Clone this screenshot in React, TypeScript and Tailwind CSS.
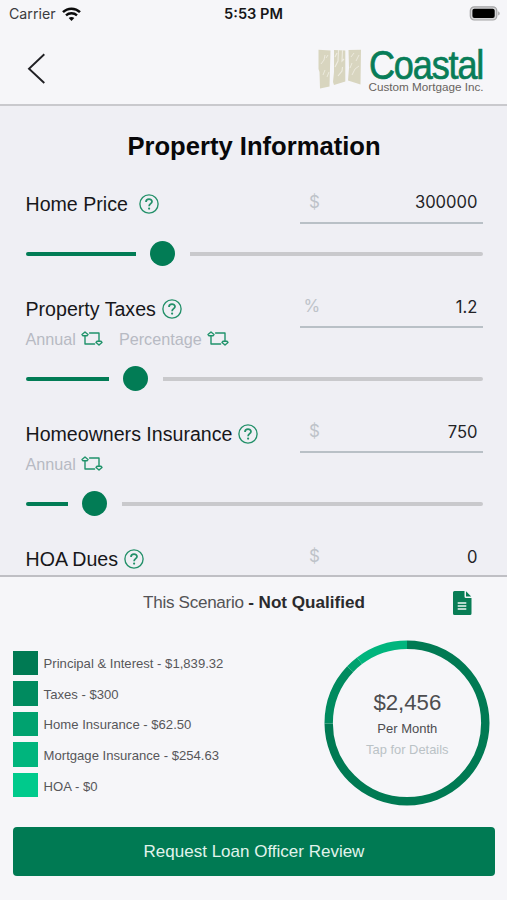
import React from 'react';

const SANS = "font-['Liberation_Sans',Arial,sans-serif]";
const UI = "font-['Inter',sans-serif]";

function HelpIcon() {
  return (
    <svg width="20" height="20" viewBox="0 0 20 20" fill="none" className="shrink-0">
      <circle cx="10" cy="10" r="9.1" stroke="#239069" strokeWidth="1.35" />
      <path d="M7 7.9C7 4.2 13 4.2 13 7.6C13 9.7 10.1 9.7 10.1 12.2" stroke="#239069" strokeWidth="1.75" />
      <circle cx="10.1" cy="14.6" r="1.1" fill="#239069" />
    </svg>
  );
}

function RepeatIcon() {
  return (
    <svg width="22" height="15" viewBox="0 0 22 15" fill="none" stroke="#21936b" strokeWidth="1.4" strokeLinejoin="round" strokeLinecap="round">
      <path d="M4 4.8V13H13.6" />
      <path d="M4 1L7 3.5L6 4.8H2L1 3.5Z" />
      <path d="M8.6 2H18V10.2" />
      <path d="M18 14L15 11.5L16 10.2H20L21 11.5Z" />
    </svg>
  );
}

function Toggle({ label }: { label: string }) {
  return (
    <span className="flex items-center gap-[5px]">
      <span className="text-[16.2px] leading-[18px] text-[#b7bac3]">{label}</span>
      <RepeatIcon />
    </span>
  );
}

interface FieldProps {
  label: string;
  gap: string;
  unit: string;
  value: string;
  toggles?: string[];
  fill?: string;
}

function Field({ label, gap, unit, value, toggles, fill }: FieldProps) {
  return (
    <section className={toggles ? 'h-[125px] shrink-0' : 'h-[104.5px] shrink-0'}>
      <div className={`flex justify-between ${toggles ? 'h-[73px]' : 'h-[52.5px]'}`}>
        <div>
          <div className={`flex h-[31px] items-center ${gap}`}>
            <span className="text-[19.6px] leading-[24px] text-[#17171a]">{label}</span>
            <HelpIcon />
          </div>
          {toggles && (
            <div className="mt-[5px] flex h-[19px] items-center gap-[16px]">
              {toggles.map((t) => (
                <Toggle key={t} label={t} />
              ))}
            </div>
          )}
        </div>
        <div className={`flex h-[35px] w-[183px] items-center justify-between border-b-2 border-[#b9c0c6] pb-[5px] pr-[5px] ${UI} ${unit === '%' ? 'pl-[4px]' : 'pl-[9.5px]'}`}>
          <span className="text-[17px] text-[#bec3c9]">{unit}</span>
          <span className="text-[16.6px] text-[#232326]">{value}</span>
        </div>
      </div>
      {fill && (
        <div className="flex h-[25px] items-center">
          <div className={`h-1 rounded-l-full bg-[#027c55] ${fill}`} />
          <div className="mx-[14.5px] size-[25px] shrink-0 rounded-full bg-[#027c55]" />
          <div className="h-1 flex-1 rounded-r-full bg-[#c9c9cc]" />
        </div>
      )}
    </section>
  );
}

const LEGEND = [
  { text: 'Principal & Interest - $1,839.32', box: 'bg-[#007a53]' },
  { text: 'Taxes - $300', box: 'bg-[#008b5f]' },
  { text: 'Home Insurance - $62.50', box: 'bg-[#00a26f]' },
  { text: 'Mortgage Insurance - $254.63', box: 'bg-[#00b57d]' },
  { text: 'HOA - $0', box: 'bg-[#00ca8c]' },
];

const SLICES = [
  { start: 0, size: 74.88, color: '#007a53' },
  { start: 74.88, size: 12.21, color: '#008b5f' },
  { start: 87.09, size: 2.54, color: '#00a26f' },
  { start: 89.63, size: 10.37, color: '#00b57d' },
];

function Donut() {
  return (
    <div className="grid size-[166px] place-items-center">
      <svg className="col-start-1 row-start-1" width="166" height="166" viewBox="0 0 166 166" fill="none">
        <g transform="rotate(-90 83 83)">
          {SLICES.map((s) => (
            <circle key={s.start} cx="83" cy="83" r="78.3" pathLength="100" stroke={s.color} strokeWidth="8.4"
              strokeDasharray={`${s.size} ${100 - s.size}`} strokeDashoffset={-s.start} />
          ))}
        </g>
      </svg>
      <div className="col-start-1 row-start-1 flex flex-col items-center pt-[3px]">
        <span className="text-[22.2px] leading-[28px] text-[#4d4d50]">$2,456</span>
        <span className="text-[13px] leading-[24px] text-[#4d4d50]">Per Month</span>
        <span className="text-[12.9px] leading-[18px] text-[#bac2c6]">Tap for Details</span>
      </div>
    </div>
  );
}

function Logo() {
  return (
    <div className="flex items-start">
      <svg width="44" height="41" viewBox="0 0 44 41" className="mr-[7px]">
        <g fill="#d8d5bf">
          <path d="M.5 .8L12.5 1.5L11.5 37.5L2 39.5L1.5 23L.5 20Z" />
          <path d="M16 1L27.3 1.5V32.5L16 36L15 33L16 23Z" />
          <path d="M30.5 1L43 .8L42.5 35.5L30 31.5L31 19Z" />
        </g>
        <g stroke="#eeece1" fill="none">
          <path d="M3 15L6 11L7 6M5 26L7 21M9 28L11 23M8 9L10 6" strokeWidth=".9" />
          <path d="M20.5 1L20 12L17 18M24.5 1L24 12L26 10M20 27L24 22L24.500 18M17 8L19 4" strokeWidth="1.1" />
          <path d="M33 8L36 4M32 19L34 14M34 26L37 20L41 17M38 12L41 6" strokeWidth=".9" />
        </g>
      </svg>
      <div className="flex w-[115.5px] flex-col">
        <span className="origin-left scale-x-[0.89] whitespace-nowrap text-[40.5px] leading-[32px] tracking-[-1.3px] text-[#087d58] [-webkit-text-stroke:0.7px_#087d58]">Coastal</span>
        <span className="whitespace-nowrap text-[11.7px] leading-[11px] text-[#68635e]">Custom Mortgage Inc.</span>
      </div>
    </div>
  );
}

export default function App() {
  return (
    <div className={`flex h-[900px] w-[507px] flex-col overflow-hidden bg-[#f6f6f9] ${SANS}`}>
      <header className="flex h-[106px] shrink-0 flex-col border-b-2 border-[#c9c9cd]">
        <div className={`grid h-[28px] grid-cols-3 items-center pl-[9px] pr-[6px] ${UI}`}>
          <div className="flex items-center gap-[6px]">
            <span className="text-[14.2px] leading-[20px] text-[#3b3b3e]">Carrier</span>
            <svg width="19" height="15" viewBox="0 0 19 15" fill="none" stroke="#0b0b0c">
              <path d="M1 5.1C5.700.5 13.3.5 18 5.100" strokeWidth="2.5" />
              <path d="M4 8.4C7 5.5 12 5.5 15 8.4" strokeWidth="2.3" />
              <path d="M6.7 11.1C8.3 9.6 10.7 9.6 12.3 11.1L9.500 14Z" fill="#0b0b0c" stroke="none" />
            </svg>
          </div>
          <span className="whitespace-nowrap pr-[3px] text-center text-[14.6px] font-semibold leading-[20px] text-[#161618]">5:53 PM</span>
          <svg width="32" height="16" viewBox="0 0 32 16" className="justify-self-end">
            <rect x="1.3" y=".8" width="26.5" height="13.2" rx="4" fill="#d5d5d7" stroke="#a4a4a6" strokeWidth="1.2" />
            <rect x="3.4" y="2.8" width="22.3" height="9.2" rx="2" fill="#000" />
            <path d="M29.2 5.2C31.2 6 31.2 8.8 29.2 9.6Z" fill="#a4a4a6" />
          </svg>
        </div>
        <div className="flex flex-1 items-start justify-between pl-[27px] pr-[23px] pt-[21px]">
          <svg width="20" height="32" viewBox="0 0 20 32" fill="none" className="mt-[4px]">
            <path d="M17.3 1.300L2 15.700L17.300 30" stroke="#202024" strokeWidth="1.9" />
          </svg>
          <Logo />
        </div>
      </header>

      <main className="flex h-[469px] shrink-0 flex-col overflow-hidden bg-[#efeff4] pl-[25.5px] pr-[24.5px]">
        <h1 className="h-[82.6px] shrink-0 pt-[25px] text-center text-[25.6px] font-bold leading-[31px] text-[#08080a]">Property Information</h1>
        <Field label="Home Price" gap="gap-[11px]" unit="$" value="300000" fill="w-[110px]" />
        <Field label="Property Taxes" gap="gap-[6px]" unit="%" value="1.2" toggles={['Annual', 'Percentage']} fill="w-[83px]" />
        <Field label="Homeowners Insurance" gap="gap-[6px]" unit="$" value="750" toggles={['Annual']} fill="w-[42px]" />
        <Field label="HOA Dues" gap="gap-[6px]" unit="$" value="0" />
      </main>

      <footer className="flex flex-1 flex-col border-t-2 border-[#bfbfc4] pl-[13px] pr-[12px]">
        <div className="grid h-[52px] grid-cols-[1fr_auto_1fr] items-center">
          <span />
          <p className="whitespace-nowrap text-[17.1px] leading-[20px] text-[#2b2b2d]">
            <span className="tracking-[-0.3px] text-[#535356]">This Scenario </span>
            <b>- Not Qualified</b>
          </p>
          <svg width="19" height="24" viewBox="0 0 19 24" className="mr-[23.5px] justify-self-end">
            <path d="M1.5 0H11.5V5.5Q11.5 7 13 7H18.5V22.5Q18.5 24 17 24H1.5Q0 24 0 22.5V1.5Q0 0 1.5 0Z" fill="#087d55" />
            <path d="M13 .3L18.2 5.5H13Z" fill="#087d55" />
            <path d="M4.7 12H13.3M4.7 15H13.3M4.7 18H13.3" stroke="#edf7f3" strokeWidth="1.5" />
          </svg>
        </div>
        <div className="mt-[10.5px] flex h-[166px] justify-between pr-[4.7px]">
          <ul className="flex flex-col gap-[6px] pt-[11px]">
            {LEGEND.map((l) => (
              <li key={l.text} className="flex h-[24.6px] items-center gap-[6px]">
                <span className={`size-[24.6px] ${l.box}`} />
                <span className="pt-[3px] text-[13.1px] leading-[18px] text-[#57575a]">{l.text}</span>
              </li>
            ))}
          </ul>
          <Donut />
        </div>
        <button className="mt-[21.5px] h-[49px] shrink-0 rounded-[4px] bg-[#007a53] text-[17px] text-[#e1f3ec]">Request Loan Officer Review</button>
      </footer>
    </div>
  );
}
